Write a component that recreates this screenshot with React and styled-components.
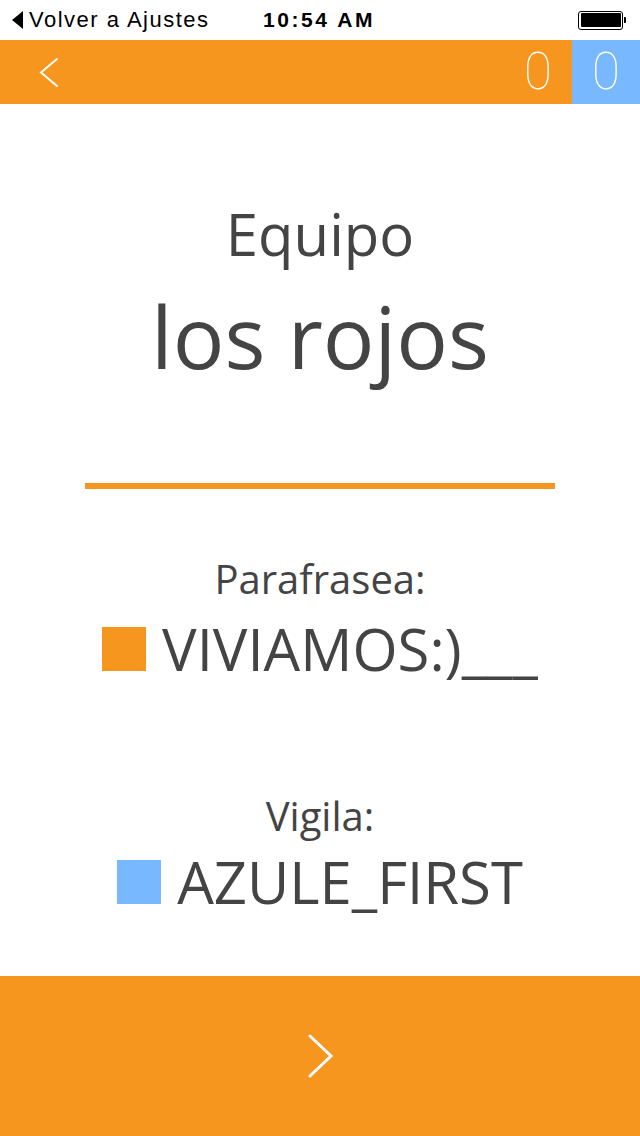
import React from 'react';
import styled, { createGlobalStyle } from 'styled-components';

const ORANGE = '#F7961F';
const BLUE = '#77B8FE';
const TEXT = '#444444';

const GlobalStyle = createGlobalStyle`
  html, body {
    margin: 0;
    padding: 0;
    background: #ffffff;
  }
  body {
    font-family: "Open Sans", "Noto Sans", sans-serif;
  }
`;

const Screen = styled.div`
  width: 640px;
  height: 1136px;
  display: flex;
  flex-direction: column;
  overflow: hidden;
  background: #ffffff;
`;

const StatusBar = styled.div`
  height: 40px;
  display: grid;
  grid-template-columns: 1fr auto 1fr;
  align-items: center;
  padding: 0 14px 0 12px;
  font-family: "Liberation Sans", Arial, sans-serif;
  color: #000;
`;

const BackLink = styled.div`
  display: flex;
  align-items: center;
  gap: 6px;
  font-size: 22px;
  letter-spacing: 1.5px;
`;

const Clock = styled.div`
  font-size: 21px;
  font-weight: 700;
  letter-spacing: 2.6px;
`;

const Battery = styled.div`
  justify-self: end;
  display: flex;
  align-items: center;
`;

const BatteryBody = styled.div`
  width: 40px;
  height: 14px;
  border: 1.5px solid #000;
  border-radius: 3px;
  padding: 1.5px;
  box-sizing: content-box;
  &::after {
    content: '';
    display: block;
    width: 100%;
    height: 100%;
    background: #000;
    border-radius: 1px;
  }
`;

const BatteryTip = styled.div`
  width: 2px;
  height: 6px;
  background: #000;
  border-radius: 0 1px 1px 0;
  margin-left: 1px;
`;

const Header = styled.div`
  height: 64px;
  background: ${ORANGE};
  display: flex;
  align-items: stretch;
`;

const HeaderBack = styled.div`
  width: 98px;
  display: flex;
  align-items: center;
  justify-content: center;
  margin-right: auto;
`;

const Score = styled.div`
  width: 68px;
  display: flex;
  align-items: center;
  justify-content: center;
  background: ${p => p.$color};
  color: #ffffff;
  font-family: Roboto, "Liberation Sans", sans-serif;
  font-weight: 100;
  font-size: 51px;
  line-height: 1;
  padding-bottom: 2px;
  box-sizing: border-box;
`;

const Main = styled.div`
  flex: 1;
  display: flex;
  flex-direction: column;
  align-items: center;
  color: ${TEXT};
`;

const TeamLabel = styled.div`
  margin-top: 101px;
  font-size: 58px;
  line-height: 1;
`;

const TeamName = styled.div`
  margin-top: 30px;
  font-size: 86px;
  line-height: 1;
`;

const Divider = styled.div`
  margin-top: 104px;
  width: 470px;
  height: 6px;
  background: ${ORANGE};
`;

const RoleLabel = styled.div`
  margin-top: ${p => p.$gap}px;
  font-size: 40px;
  line-height: 1;
`;

const PlayerRow = styled.div`
  margin-top: ${p => p.$gap}px;
  display: flex;
  align-items: baseline;
  gap: 16px;
  font-size: 58px;
  line-height: 1;
`;

const Swatch = styled.div`
  width: 44px;
  height: 44px;
  background: ${p => p.$color};
`;

const Footer = styled.div`
  height: 160px;
  background: ${ORANGE};
  display: flex;
  align-items: center;
  justify-content: center;
`;

const Chevron = ({ dir = 'right', w, h, stroke }) => (
  <svg width={w} height={h} viewBox={`0 0 ${w} ${h}`} fill="none">
    <polyline
      points={
        dir === 'right'
          ? `${stroke},${stroke} ${w - stroke},${h / 2} ${stroke},${h - stroke}`
          : `${w - stroke},${stroke} ${stroke},${h / 2} ${w - stroke},${h - stroke}`
      }
      stroke="#ffffff"
      strokeWidth={stroke}
      strokeLinecap="round"
      strokeLinejoin="miter"
    />
  </svg>
);

export default function App() {
  return (
    <Screen>
      <GlobalStyle />
      <StatusBar>
        <BackLink>
          <svg width="11" height="18" viewBox="0 0 11 18">
            <polygon points="11,0 0,9 11,18" fill="#000" />
          </svg>
          Volver a Ajustes
        </BackLink>
        <Clock>10:54 AM</Clock>
        <Battery>
          <BatteryBody />
          <BatteryTip />
        </Battery>
      </StatusBar>

      <Header>
        <HeaderBack>
          <Chevron dir="left" w={20} h={31} stroke={2} />
        </HeaderBack>
        <Score $color={ORANGE}>0</Score>
        <Score $color={BLUE}>0</Score>
      </Header>

      <Main>
        <TeamLabel>Equipo</TeamLabel>
        <TeamName>los rojos</TeamName>
        <Divider />
        <RoleLabel $gap={70}>Parafrasea:</RoleLabel>
        <PlayerRow $gap={21}>
          <Swatch $color={ORANGE} />
          VIVIAMOS:)___
        </PlayerRow>
        <RoleLabel $gap={118}>Vigila:</RoleLabel>
        <PlayerRow $gap={17}>
          <Swatch $color={BLUE} />
          AZULE_FIRST
        </PlayerRow>
      </Main>

      <Footer>
        <Chevron dir="right" w={27} h={46} stroke={3} />
      </Footer>
    </Screen>
  );
}
